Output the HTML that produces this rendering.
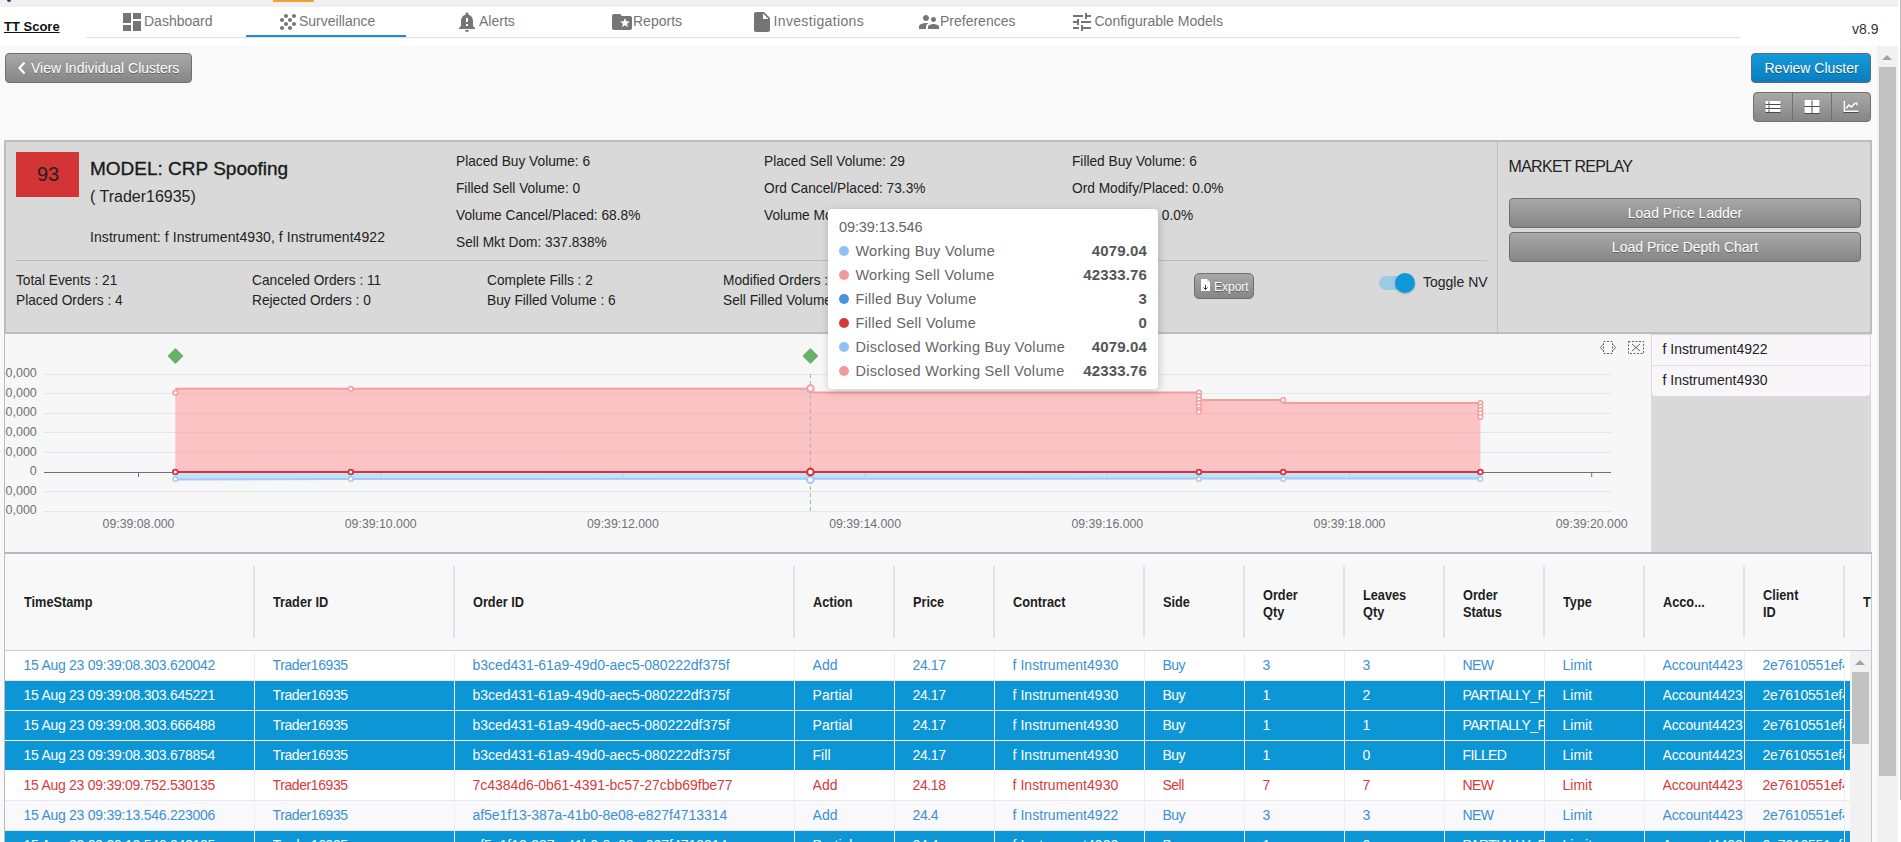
<!DOCTYPE html>
<html><head><meta charset="utf-8">
<style>
*{box-sizing:border-box;margin:0;padding:0}
html,body{width:1901px;height:842px;overflow:hidden;background:#f9f9f9;font-family:"Liberation Sans",sans-serif;color:#333}
.a{position:absolute;white-space:nowrap}
.ic{fill:#757575}
.btn-gray{border:1px solid #6f6f6f;border-radius:4px;background:linear-gradient(#a8a8a8,#868686)}
.btn-blue{border:1px solid #5b6b76;border-radius:4px;background:linear-gradient(#139ad9,#0b7dbf)}
.ts{text-shadow:0 -1px 0 rgba(0,0,0,.45)}
</style></head><body>
<div class="a" style="left:0;top:0;width:1901px;height:7px;background:#f0f0f0"></div>
<div class="a" style="left:273px;top:0;width:41px;height:2px;background:#f0a030"></div>
<div class="a" style="left:7px;top:-2px;width:4px;height:4px;border-radius:2px;background:#1c3c78"></div>
<div class="a" style="left:0;top:7px;width:1898px;height:39px;background:#fff"></div>
<div class="a" style="left:4px;top:20px;font-size:13px;line-height:13px;color:#111;font-weight:bold;text-decoration:underline">TT Score</div>
<div class="a" style="left:86px;top:37px;width:1654px;height:1px;background:#e0e0e0"></div>
<div class="a" style="left:246px;top:35px;width:160px;height:2px;background:#1a8fd6"></div>
<div class="a" style="left:1852px;top:22px;font-size:14px;line-height:14px;color:#333;">v8.9</div>
<svg class="a" style="left:120px;top:10px" width="24" height="24" viewBox="0 0 24 24"><path class="ic" d="M3 13h8V3H3v10zm0 8h8v-6H3v6zm10 0h8V11h-8v10zm0-18v6h8V3h-8z"/></svg>
<div class="a" style="left:144px;top:14px;font-size:14px;line-height:14px;color:#757575;">Dashboard</div>
<svg class="a" style="left:276px;top:10px" width="24" height="24" viewBox="0 0 24 24"><path class="ic" d="M10 12c-1.1 0-2 .9-2 2s.9 2 2 2 2-.9 2-2-.9-2-2-2zM6 8c-1.1 0-2 .9-2 2s.9 2 2 2 2-.9 2-2-.9-2-2-2zm0 8c-1.1 0-2 .9-2 2s.9 2 2 2 2-.9 2-2-.9-2-2-2zm12-8c1.1 0 2-.9 2-2s-.9-2-2-2-2 .9-2 2 .9 2 2 2zm-4 8c-1.1 0-2 .9-2 2s.9 2 2 2 2-.9 2-2-.9-2-2-2zm4-4c-1.1 0-2 .9-2 2s.9 2 2 2 2-.9 2-2-.9-2-2-2zm-4-4c-1.1 0-2 .9-2 2s.9 2 2 2 2-.9 2-2-.9-2-2-2zm-4-4c-1.1 0-2 .9-2 2s.9 2 2 2 2-.9 2-2-.9-2-2-2z"/></svg>
<div class="a" style="left:299px;top:14px;font-size:14px;line-height:14px;color:#757575;">Surveillance</div>
<svg class="a" style="left:455px;top:10px" width="24" height="24" viewBox="0 0 24 24"><path class="ic" d="M18 16v-5c0-3.08-1.64-5.64-4.5-6.32V4c0-.83-.67-1.5-1.5-1.5s-1.5.67-1.5 1.5v.68C7.63 5.36 6 7.92 6 11v5l-2 2v1h16v-1l-2-2zm-5 0h-2v-2h2v2zm0-4h-2V8h2v4zm-1 10c1.1 0 2-.9 2-2h-4c0 1.1.89 2 2 2z"/></svg>
<div class="a" style="left:479px;top:14px;font-size:14px;line-height:14px;color:#757575;">Alerts</div>
<svg class="a" style="left:609.5px;top:10px" width="24" height="24" viewBox="0 0 24 24"><path class="ic" d="M20 6h-8l-2-2H4c-1.1 0-1.99.9-1.99 2L2 18c0 1.1.9 2 2 2h16c1.1 0 2-.9 2-2V8c0-1.1-.9-2-2-2zm-2.06 11L15 15.28 12.06 17l.78-3.33-2.59-2.24 3.41-.29L15 8l1.34 3.14 3.41.29-2.59 2.24.78 3.33z"/></svg>
<div class="a" style="left:633px;top:14px;font-size:14px;line-height:14px;color:#757575;">Reports</div>
<svg class="a" style="left:750px;top:10px" width="24" height="24" viewBox="0 0 24 24"><path class="ic" fill-rule="evenodd" d="M6 2c-1.1 0-1.99.9-1.99 2L4 20c0 1.1.89 2 1.99 2H18c1.1 0 2-.9 2-2V8l-6-6H6zm7 7V3.5L18.5 9H13z"/></svg>
<div class="a" style="left:773.5px;top:14px;font-size:14px;line-height:14px;color:#757575;letter-spacing:0.35px">Investigations</div>
<svg class="a" style="left:916.5px;top:10px" width="24" height="24" viewBox="0 0 24 24"><path class="ic" d="M16.5 12c1.38 0 2.49-1.12 2.49-2.5S17.88 7 16.5 7C15.12 7 14 8.12 14 9.5s1.12 2.5 2.5 2.5zM9 11c1.66 0 2.99-1.34 2.99-3S10.66 5 9 5C7.34 5 6 6.34 6 8s1.34 3 3 3zm7.5 3c-1.83 0-5.5.92-5.5 2.75V19h11v-2.25c0-1.83-3.67-2.75-5.5-2.75zM9 13c-2.33 0-7 1.17-7 3.5V19h7v-2.25c0-.85.33-2.34 2.37-3.47C10.5 13.1 9.66 13 9 13z"/></svg>
<div class="a" style="left:940px;top:14px;font-size:14px;line-height:14px;color:#757575;">Preferences</div>
<svg class="a" style="left:1070px;top:10px" width="24" height="24" viewBox="0 0 24 24"><path class="ic" d="M3 17v2h6v-2H3zM3 5v2h10V5H3zm10 16v-2h8v-2h-8v-2h-2v6h2zM7 9v2H3v2h4v2h2V9H7zm14 4v-2H11v2h10zm-6-4h2V7h4V5h-4V3h-2v6z"/></svg>
<div class="a" style="left:1094.5px;top:14px;font-size:14px;line-height:14px;color:#757575;">Configurable Models</div>
<div class="a btn-gray" style="left:5px;top:53px;width:187px;height:30px"></div>
<svg class="a" style="left:17px;top:61px" width="10" height="14" viewBox="0 0 10 14"><path d="M7.5 1.5L2.5 7l5 5.5" fill="none" stroke="#fff" stroke-width="2.2"/></svg>
<div class="a" style="left:31px;top:61px;font-size:14px;line-height:14px;color:#fff;text-shadow:0 1px 0 rgba(0,0,0,.35)">View Individual Clusters</div>
<div class="a btn-blue" style="left:1751px;top:53px;width:120px;height:30px"></div>
<div class="a" style="left:1764.5px;top:61px;font-size:14px;line-height:14px;color:#fff;text-shadow:0 1px 0 rgba(0,0,0,.35)">Review Cluster</div>
<div class="a btn-gray" style="left:1753px;top:92px;width:118px;height:30px"></div>
<div class="a" style="left:1792px;top:93px;width:1px;height:28px;background:#707070"></div>
<div class="a" style="left:1831px;top:93px;width:1px;height:28px;background:#707070"></div>
<svg class="a" style="left:1760px;top:96px" width="100" height="22" viewBox="1760 96 100 22"><g fill="#333" opacity="0.75"><rect x="1765.5" y="102" width="15" height="3"/><rect x="1765.5" y="106" width="15" height="3"/><rect x="1765.5" y="110" width="15" height="3"/><rect x="1804.5" y="101" width="15" height="13"/><path d="M1843.5 102h1.5v9.5h13.5v1.5h-15z"/></g><g fill="#fff"><rect x="1765.5" y="101" width="3" height="3"/><rect x="1769.5" y="101" width="11" height="3"/><rect x="1765.5" y="105" width="3" height="3"/><rect x="1769.5" y="105" width="11" height="3"/><rect x="1765.5" y="109" width="3" height="3"/><rect x="1769.5" y="109" width="11" height="3"/><rect x="1804.5" y="100" width="7" height="6"/><rect x="1812.5" y="100" width="7" height="6"/><rect x="1804.5" y="107" width="7" height="6"/><rect x="1812.5" y="107" width="7" height="6"/><path d="M1843.5 101h1.5v9.5h13.5v1.5h-15z"/><path d="M1846 108.5l3-3.5 2.5 2 3-3.5" fill="none" stroke="#fff" stroke-width="1.6"/><path d="M1854 102.5h3.5v3.5z"/></g></svg>
<div class="a" style="left:1877px;top:46px;width:21px;height:796px;background:#f1f1f1"></div>
<div class="a" style="left:1879px;top:67px;width:17px;height:709px;background:#c1c1c1"></div>
<svg class="a" style="left:1882px;top:54px" width="10" height="7" viewBox="0 0 10 7"><path d="M0 6h10L5 1z" fill="#a3a3a3"/></svg>
<div class="a" style="left:1898px;top:0;width:3px;height:842px;background:#fff"></div>
<div class="a" style="left:1900px;top:0;width:1px;height:800px;background:#bdbdbd"></div>
<div class="a" style="left:4px;top:140px;width:1868px;height:194px;background:#d9d9d9;border:2px solid #bdbdbd"></div>
<div class="a" style="left:16px;top:152px;width:63px;height:45px;background:#d33535"></div>
<div class="a" style="left:37px;top:164px;font-size:20px;line-height:20px;color:#222;">93</div>
<div class="a" style="left:90px;top:159px;font-size:19px;line-height:19px;color:#1a1a1a;-webkit-text-stroke:0.35px #1a1a1a">MODEL: CRP Spoofing</div>
<div class="a" style="left:90px;top:189px;font-size:16px;line-height:16px;color:#222;">( Trader16935)</div>
<div class="a" style="left:90px;top:230px;font-size:14px;line-height:14px;color:#222;letter-spacing:0.07px">Instrument: f Instrument4930, f Instrument4922</div>
<div class="a" style="left:456px;top:154px;font-size:14.5px;line-height:14.5px;color:#222;transform:scaleX(0.945);transform-origin:0 0">Placed Buy Volume: 6</div>
<div class="a" style="left:764px;top:154px;font-size:14.5px;line-height:14.5px;color:#222;transform:scaleX(0.945);transform-origin:0 0">Placed Sell Volume: 29</div>
<div class="a" style="left:1072px;top:154px;font-size:14.5px;line-height:14.5px;color:#222;transform:scaleX(0.945);transform-origin:0 0">Filled Buy Volume: 6</div>
<div class="a" style="left:456px;top:181px;font-size:14.5px;line-height:14.5px;color:#222;transform:scaleX(0.945);transform-origin:0 0">Filled Sell Volume: 0</div>
<div class="a" style="left:764px;top:181px;font-size:14.5px;line-height:14.5px;color:#222;transform:scaleX(0.945);transform-origin:0 0">Ord Cancel/Placed: 73.3%</div>
<div class="a" style="left:1072px;top:181px;font-size:14.5px;line-height:14.5px;color:#222;transform:scaleX(0.945);transform-origin:0 0">Ord Modify/Placed: 0.0%</div>
<div class="a" style="left:456px;top:208px;font-size:14.5px;line-height:14.5px;color:#222;transform:scaleX(0.945);transform-origin:0 0">Volume Cancel/Placed: 68.8%</div>
<div class="a" style="left:764px;top:208px;font-size:14.5px;line-height:14.5px;color:#222;transform:scaleX(0.945);transform-origin:0 0">Volume Modify/Placed: 0.0%</div>
<div class="a" style="left:1072px;top:208px;font-size:14.5px;line-height:14.5px;color:#222;transform:scaleX(0.945);transform-origin:0 0">Buy Mkt Dom: 0.0%</div>
<div class="a" style="left:456px;top:235px;font-size:14.5px;line-height:14.5px;color:#222;transform:scaleX(0.945);transform-origin:0 0">Sell Mkt Dom: 337.838%</div>
<div class="a" style="left:16px;top:260px;width:1471px;height:1px;background:#bdbdbd"></div>
<div class="a" style="left:16px;top:273px;font-size:14.5px;line-height:14.5px;color:#222;transform:scaleX(0.945);transform-origin:0 0">Total Events : 21</div>
<div class="a" style="left:251.5px;top:273px;font-size:14.5px;line-height:14.5px;color:#222;transform:scaleX(0.945);transform-origin:0 0">Canceled Orders : 11</div>
<div class="a" style="left:487px;top:273px;font-size:14.5px;line-height:14.5px;color:#222;transform:scaleX(0.945);transform-origin:0 0">Complete Fills : 2</div>
<div class="a" style="left:722.5px;top:273px;font-size:14.5px;line-height:14.5px;color:#222;transform:scaleX(0.945);transform-origin:0 0">Modified Orders : 0</div>
<div class="a" style="left:16px;top:293px;font-size:14.5px;line-height:14.5px;color:#222;transform:scaleX(0.945);transform-origin:0 0">Placed Orders : 4</div>
<div class="a" style="left:251.5px;top:293px;font-size:14.5px;line-height:14.5px;color:#222;transform:scaleX(0.945);transform-origin:0 0">Rejected Orders : 0</div>
<div class="a" style="left:487px;top:293px;font-size:14.5px;line-height:14.5px;color:#222;transform:scaleX(0.945);transform-origin:0 0">Buy Filled Volume : 6</div>
<div class="a" style="left:722.5px;top:293px;font-size:14.5px;line-height:14.5px;color:#222;transform:scaleX(0.945);transform-origin:0 0">Sell Filled Volume : 0</div>
<div class="a btn-gray" style="left:1194px;top:273px;width:60px;height:26px;border-radius:5px"></div>
<svg class="a" style="left:1200px;top:279px" width="11" height="13" viewBox="0 0 11 13"><path d="M1 0h6l3 3v9H1z" fill="#fff"/><path d="M7 0v3h3" fill="#ddd"/><path d="M5.5 6v4.5M3.5 8.5l2 2 2-2" fill="none" stroke="#333" stroke-width="1"/></svg>
<div class="a" style="left:1214px;top:281px;font-size:12px;line-height:12px;color:#fff;text-shadow:0 1px 0 rgba(0,0,0,.4)">Export</div>
<div class="a" style="left:1379px;top:276px;width:34px;height:14px;border-radius:7px;background:#9ccae2"></div>
<div class="a" style="left:1395px;top:273px;width:20px;height:20px;border-radius:10px;background:#0f98d8;box-shadow:0 1px 2px rgba(0,0,0,.25)"></div>
<div class="a" style="left:1423px;top:275px;font-size:14px;line-height:14px;color:#222;">Toggle NV</div>
<div class="a" style="left:1497px;top:142px;width:1px;height:190px;background:#bdbdbd"></div>
<div class="a" style="left:1508.5px;top:159px;font-size:16px;line-height:16px;color:#222;letter-spacing:-0.7px">MARKET REPLAY</div>
<div class="a btn-gray" style="left:1509px;top:198px;width:352px;height:30px"></div>
<div class="a" style="left:1485px;width:400px;text-align:center;top:206px;font-size:14px;line-height:14px;color:#fff;text-shadow:0 1px 0 rgba(0,0,0,.35)">Load Price Ladder</div>
<div class="a btn-gray" style="left:1509px;top:232px;width:352px;height:30px"></div>
<div class="a" style="left:1485px;width:400px;text-align:center;top:240px;font-size:14px;line-height:14px;color:#fff;text-shadow:0 1px 0 rgba(0,0,0,.35)">Load Price Depth Chart</div>
<div class="a" style="left:4px;top:334px;width:1px;height:219px;background:#bdbdbd"></div>
<div class="a" style="left:5px;top:334px;width:1646px;height:218px;background:#f7f7f7;overflow:hidden">
<svg width="1646" height="218" viewBox="5 334 1646 218" style="position:absolute;left:0;top:0" font-family="Liberation Sans"><line x1="44" x2="1611" y1="374.5" y2="374.5" stroke="#e0e6f1" stroke-width="1"/><line x1="44" x2="1611" y1="393.5" y2="393.5" stroke="#e0e6f1" stroke-width="1"/><line x1="44" x2="1611" y1="413.5" y2="413.5" stroke="#e0e6f1" stroke-width="1"/><line x1="44" x2="1611" y1="432.5" y2="432.5" stroke="#e0e6f1" stroke-width="1"/><line x1="44" x2="1611" y1="452.5" y2="452.5" stroke="#e0e6f1" stroke-width="1"/><line x1="44" x2="1611" y1="491.5" y2="491.5" stroke="#e0e6f1" stroke-width="1"/><line x1="44" x2="1611" y1="511.5" y2="511.5" stroke="#e0e6f1" stroke-width="1"/><path d="M175.3 472 L175.3 392.7 L175.3 388.7 L350.8 388.7 L810.4 388.7 L810.4 392.4 L1198.9 392.4 L1198.9 400 L1283.2 400 L1283.2 403 L1480.4 403 L1480.4 472 Z" fill="#ff9999" fill-opacity="0.55"/><path d="M175.3 388.7 L810.4 388.7 L810.4 392.4 L1198.9 392.4 L1198.9 400 L1283.2 400 L1283.2 403 L1480.4 403" fill="none" stroke="#f99c9c" stroke-width="2"/><line x1="44" x2="1611" y1="472.5" y2="472.5" stroke="#6e7079" stroke-width="1"/><line x1="138.5" x2="138.5" y1="472" y2="477" stroke="#6e7079" stroke-width="1"/><line x1="380.7" x2="380.7" y1="472" y2="477" stroke="#6e7079" stroke-width="1"/><line x1="622.9" x2="622.9" y1="472" y2="477" stroke="#6e7079" stroke-width="1"/><line x1="865.1" x2="865.1" y1="472" y2="477" stroke="#6e7079" stroke-width="1"/><line x1="1107.3" x2="1107.3" y1="472" y2="477" stroke="#6e7079" stroke-width="1"/><line x1="1349.5" x2="1349.5" y1="472" y2="477" stroke="#6e7079" stroke-width="1"/><line x1="1591.7" x2="1591.7" y1="472" y2="477" stroke="#6e7079" stroke-width="1"/><path d="M175.3 473 L175.3 479.5 L350.8 479 L1480.4 478.5 L1480.4 473 Z" fill="#bcdcfb" fill-opacity="0.85"/><path d="M175.3 479.5 L350.8 479 L1480.4 478.5" fill="none" stroke="#a3caf6" stroke-width="2"/><line x1="175.3" x2="1480.4" y1="472" y2="472" stroke="#d6343c" stroke-width="2.2"/><circle cx="175.3" cy="392.7" r="2.3" fill="#fff" stroke="#f0a0a0" stroke-width="1.5"/><circle cx="350.8" cy="388.8" r="2.3" fill="#fff" stroke="#f0a0a0" stroke-width="1.5"/><circle cx="1283.2" cy="400" r="2.3" fill="#fff" stroke="#f0a0a0" stroke-width="1.5"/><circle cx="1198.9" cy="392.5" r="2.3" fill="#fff" stroke="#f0a0a0" stroke-width="1.5"/><circle cx="1198.9" cy="396" r="2.3" fill="#fff" stroke="#f0a0a0" stroke-width="1.5"/><circle cx="1198.9" cy="399.5" r="2.3" fill="#fff" stroke="#f0a0a0" stroke-width="1.5"/><circle cx="1198.9" cy="403" r="2.3" fill="#fff" stroke="#f0a0a0" stroke-width="1.5"/><circle cx="1198.9" cy="406.5" r="2.3" fill="#fff" stroke="#f0a0a0" stroke-width="1.5"/><circle cx="1198.9" cy="410" r="2.3" fill="#fff" stroke="#f0a0a0" stroke-width="1.5"/><circle cx="1198.9" cy="412" r="2.3" fill="#fff" stroke="#f0a0a0" stroke-width="1.5"/><circle cx="1480.4" cy="403" r="2.3" fill="#fff" stroke="#f0a0a0" stroke-width="1.5"/><circle cx="1480.4" cy="406.5" r="2.3" fill="#fff" stroke="#f0a0a0" stroke-width="1.5"/><circle cx="1480.4" cy="410" r="2.3" fill="#fff" stroke="#f0a0a0" stroke-width="1.5"/><circle cx="1480.4" cy="413.5" r="2.3" fill="#fff" stroke="#f0a0a0" stroke-width="1.5"/><circle cx="1480.4" cy="417" r="2.3" fill="#fff" stroke="#f0a0a0" stroke-width="1.5"/><circle cx="175.3" cy="479" r="2.3" fill="#fff" stroke="#a3caf6" stroke-width="1.5"/><circle cx="175.3" cy="472" r="2.4" fill="#fff" stroke="#d6343c" stroke-width="1.8"/><circle cx="350.8" cy="479" r="2.3" fill="#fff" stroke="#a3caf6" stroke-width="1.5"/><circle cx="350.8" cy="472" r="2.4" fill="#fff" stroke="#d6343c" stroke-width="1.8"/><circle cx="1198.9" cy="479" r="2.3" fill="#fff" stroke="#a3caf6" stroke-width="1.5"/><circle cx="1198.9" cy="472" r="2.4" fill="#fff" stroke="#d6343c" stroke-width="1.8"/><circle cx="1283.2" cy="479" r="2.3" fill="#fff" stroke="#a3caf6" stroke-width="1.5"/><circle cx="1283.2" cy="472" r="2.4" fill="#fff" stroke="#d6343c" stroke-width="1.8"/><circle cx="1480.4" cy="479" r="2.3" fill="#fff" stroke="#a3caf6" stroke-width="1.5"/><circle cx="1480.4" cy="472" r="2.4" fill="#fff" stroke="#d6343c" stroke-width="1.8"/><line x1="810.4" x2="810.4" y1="374" y2="511" stroke="#a8b0bb" stroke-width="1" stroke-dasharray="4 3"/><circle cx="810.4" cy="388.6" r="3.3" fill="#fff" stroke="#f0a0a0" stroke-width="2"/><circle cx="810.4" cy="479.7" r="3.3" fill="#fff" stroke="#a3caf6" stroke-width="2"/><circle cx="810.4" cy="472" r="3.3" fill="#fff" stroke="#d6343c" stroke-width="2.2"/><path d="M175.5 348 L183.5 356 L175.5 364 L167.5 356 Z" fill="#67b168"/><path d="M810.4 348 L818.4 356 L810.4 364 L802.4 356 Z" fill="#67b168"/><text x="36.8" y="377.3" text-anchor="end" font-size="12.5" fill="#6e7079">50,000</text><text x="36.8" y="396.8" text-anchor="end" font-size="12.5" fill="#6e7079">40,000</text><text x="36.8" y="416.3" text-anchor="end" font-size="12.5" fill="#6e7079">30,000</text><text x="36.8" y="435.8" text-anchor="end" font-size="12.5" fill="#6e7079">20,000</text><text x="36.8" y="455.5" text-anchor="end" font-size="12.5" fill="#6e7079">10,000</text><text x="36.8" y="475.3" text-anchor="end" font-size="12.5" fill="#6e7079">0</text><text x="36.8" y="494.8" text-anchor="end" font-size="12.5" fill="#6e7079">-10,000</text><text x="36.8" y="514.4" text-anchor="end" font-size="12.5" fill="#6e7079">-20,000</text><text x="138.5" y="528" text-anchor="middle" font-size="12.3" fill="#6e7079">09:39:08.000</text><text x="380.7" y="528" text-anchor="middle" font-size="12.3" fill="#6e7079">09:39:10.000</text><text x="622.9" y="528" text-anchor="middle" font-size="12.3" fill="#6e7079">09:39:12.000</text><text x="865.1" y="528" text-anchor="middle" font-size="12.3" fill="#6e7079">09:39:14.000</text><text x="1107.3" y="528" text-anchor="middle" font-size="12.3" fill="#6e7079">09:39:16.000</text><text x="1349.5" y="528" text-anchor="middle" font-size="12.3" fill="#6e7079">09:39:18.000</text><text x="1591.7" y="528" text-anchor="middle" font-size="12.3" fill="#6e7079">09:39:20.000</text><g fill="none" stroke="#666" stroke-width="1" stroke-dasharray="2 1.5"><rect x="1603.5" y="341.5" width="9" height="12"/></g><path d="M1603 344.5 L1600.5 347.5 L1603 350.5 M1613 344.5 L1615.5 347.5 L1613 350.5" fill="none" stroke="#666" stroke-width="1"/><g fill="none" stroke="#666" stroke-width="1" stroke-dasharray="2 1.5"><rect x="1628.5" y="341.5" width="15" height="12"/></g><path d="M1632 344 L1640 351 M1640 344 L1632 351" fill="none" stroke="#666" stroke-width="1"/></svg>
</div>
<div class="a" style="left:1651px;top:334px;width:220px;height:218px;background:#d9d9d9"></div>
<div class="a" style="left:1652px;top:335px;width:218px;height:61px;background:#f8f6f8;border-radius:0 0 4px 4px"></div>
<div class="a" style="left:1652px;top:365px;width:218px;height:1px;background:#dde0e8"></div>
<div class="a" style="left:1662.5px;top:342px;font-size:14px;line-height:14px;color:#222;">f Instrument4922</div>
<div class="a" style="left:1662.5px;top:373px;font-size:14px;line-height:14px;color:#222;">f Instrument4930</div>
<div class="a" style="left:4px;top:552px;width:1868px;height:2px;background:#b6b8bd"></div>
<div class="a" style="left:4px;top:554px;width:1px;height:288px;background:#bdbdbd"></div>
<div class="a" style="left:5px;top:554px;width:1866px;height:96px;background:#f8f8f8"></div>
<div class="a" style="left:5px;top:650px;width:1866px;height:1px;background:#c9ccd4"></div>
<div class="a" style="left:1871px;top:554px;width:1px;height:288px;background:#c6c8cf"></div>
<div class="a" style="left:1872px;top:45px;width:5px;height:797px;background:#fafafa"></div>
<div class="a" style="left:253px;top:566px;width:2px;height:72px;background:#dfe2ea"></div>
<div class="a" style="left:453px;top:566px;width:2px;height:72px;background:#dfe2ea"></div>
<div class="a" style="left:793px;top:566px;width:2px;height:72px;background:#dfe2ea"></div>
<div class="a" style="left:893px;top:566px;width:2px;height:72px;background:#dfe2ea"></div>
<div class="a" style="left:993px;top:566px;width:2px;height:72px;background:#dfe2ea"></div>
<div class="a" style="left:1143px;top:566px;width:2px;height:72px;background:#dfe2ea"></div>
<div class="a" style="left:1243px;top:566px;width:2px;height:72px;background:#dfe2ea"></div>
<div class="a" style="left:1343px;top:566px;width:2px;height:72px;background:#dfe2ea"></div>
<div class="a" style="left:1443px;top:566px;width:2px;height:72px;background:#dfe2ea"></div>
<div class="a" style="left:1543px;top:566px;width:2px;height:72px;background:#dfe2ea"></div>
<div class="a" style="left:1643px;top:566px;width:2px;height:72px;background:#dfe2ea"></div>
<div class="a" style="left:1743px;top:566px;width:2px;height:72px;background:#dfe2ea"></div>
<div class="a" style="left:1843px;top:566px;width:2px;height:72px;background:#dfe2ea"></div>
<div class="a" style="left:23.5px;top:595px;font-size:14px;line-height:14px;color:#1e1e1e;font-weight:bold;transform:scaleX(0.91);transform-origin:0 0">TimeStamp</div>
<div class="a" style="left:272.5px;top:595px;font-size:14px;line-height:14px;color:#1e1e1e;font-weight:bold;transform:scaleX(0.91);transform-origin:0 0">Trader ID</div>
<div class="a" style="left:472.5px;top:595px;font-size:14px;line-height:14px;color:#1e1e1e;font-weight:bold;transform:scaleX(0.91);transform-origin:0 0">Order ID</div>
<div class="a" style="left:812.5px;top:595px;font-size:14px;line-height:14px;color:#1e1e1e;font-weight:bold;transform:scaleX(0.91);transform-origin:0 0">Action</div>
<div class="a" style="left:912.5px;top:595px;font-size:14px;line-height:14px;color:#1e1e1e;font-weight:bold;transform:scaleX(0.91);transform-origin:0 0">Price</div>
<div class="a" style="left:1012.5px;top:595px;font-size:14px;line-height:14px;color:#1e1e1e;font-weight:bold;transform:scaleX(0.91);transform-origin:0 0">Contract</div>
<div class="a" style="left:1162.5px;top:595px;font-size:14px;line-height:14px;color:#1e1e1e;font-weight:bold;transform:scaleX(0.91);transform-origin:0 0">Side</div>
<div class="a" style="left:1262.5px;top:588px;font-size:14px;line-height:14px;color:#1e1e1e;font-weight:bold;transform:scaleX(0.91);transform-origin:0 0">Order</div>
<div class="a" style="left:1262.5px;top:605px;font-size:14px;line-height:14px;color:#1e1e1e;font-weight:bold;transform:scaleX(0.91);transform-origin:0 0">Qty</div>
<div class="a" style="left:1362.5px;top:588px;font-size:14px;line-height:14px;color:#1e1e1e;font-weight:bold;transform:scaleX(0.91);transform-origin:0 0">Leaves</div>
<div class="a" style="left:1362.5px;top:605px;font-size:14px;line-height:14px;color:#1e1e1e;font-weight:bold;transform:scaleX(0.91);transform-origin:0 0">Qty</div>
<div class="a" style="left:1462.5px;top:588px;font-size:14px;line-height:14px;color:#1e1e1e;font-weight:bold;transform:scaleX(0.91);transform-origin:0 0">Order</div>
<div class="a" style="left:1462.5px;top:605px;font-size:14px;line-height:14px;color:#1e1e1e;font-weight:bold;transform:scaleX(0.91);transform-origin:0 0">Status</div>
<div class="a" style="left:1562.5px;top:595px;font-size:14px;line-height:14px;color:#1e1e1e;font-weight:bold;transform:scaleX(0.91);transform-origin:0 0">Type</div>
<div class="a" style="left:1662.5px;top:595px;font-size:14px;line-height:14px;color:#1e1e1e;font-weight:bold;transform:scaleX(0.91);transform-origin:0 0">Acco...</div>
<div class="a" style="left:1762.5px;top:588px;font-size:14px;line-height:14px;color:#1e1e1e;font-weight:bold;transform:scaleX(0.91);transform-origin:0 0">Client</div>
<div class="a" style="left:1762.5px;top:605px;font-size:14px;line-height:14px;color:#1e1e1e;font-weight:bold;transform:scaleX(0.91);transform-origin:0 0">ID</div>
<div class="a" style="left:1862.5px;top:595px;font-size:14px;line-height:14px;color:#1e1e1e;font-weight:bold;transform:scaleX(0.91);transform-origin:0 0">T</div>
<div class="a" style="left:5px;top:651px;width:1845px;height:30px;background:#ffffff;overflow:hidden">
<div class="a" style="left:0;top:29px;width:1845px;height:1px;background:#e6e8ee"></div>
<div class="a" style="left:18.5px;top:0;height:29px;padding-top:7px;width:230.5px;overflow:hidden;font-size:14px;line-height:14px;color:#3b90d2;letter-spacing:-0.27px">15 Aug 23 09:39:08.303.620042</div>
<div class="a" style="left:249px;top:0;width:1px;height:30px;background:#eceef3"></div>
<div class="a" style="left:267.5px;top:0;height:29px;padding-top:7px;width:181.5px;overflow:hidden;font-size:14px;line-height:14px;color:#3b90d2;letter-spacing:-0.4px">Trader16935</div>
<div class="a" style="left:449px;top:0;width:1px;height:30px;background:#eceef3"></div>
<div class="a" style="left:467.5px;top:0;height:29px;padding-top:7px;width:321.5px;overflow:hidden;font-size:14px;line-height:14px;color:#3b90d2;letter-spacing:-0.04px">b3ced431-61a9-49d0-aec5-080222df375f</div>
<div class="a" style="left:789px;top:0;width:1px;height:30px;background:#eceef3"></div>
<div class="a" style="left:807.5px;top:0;height:29px;padding-top:7px;width:81.5px;overflow:hidden;font-size:14px;line-height:14px;color:#3b90d2;letter-spacing:0.05px">Add</div>
<div class="a" style="left:889px;top:0;width:1px;height:30px;background:#eceef3"></div>
<div class="a" style="left:907.5px;top:0;height:29px;padding-top:7px;width:81.5px;overflow:hidden;font-size:14px;line-height:14px;color:#3b90d2;letter-spacing:-0.4px">24.17</div>
<div class="a" style="left:989px;top:0;width:1px;height:30px;background:#eceef3"></div>
<div class="a" style="left:1007.5px;top:0;height:29px;padding-top:7px;width:131.5px;overflow:hidden;font-size:14px;line-height:14px;color:#3b90d2;letter-spacing:0.05px">f Instrument4930</div>
<div class="a" style="left:1139px;top:0;width:1px;height:30px;background:#eceef3"></div>
<div class="a" style="left:1157.5px;top:0;height:29px;padding-top:7px;width:81.5px;overflow:hidden;font-size:14px;line-height:14px;color:#3b90d2;letter-spacing:-0.5px">Buy</div>
<div class="a" style="left:1239px;top:0;width:1px;height:30px;background:#eceef3"></div>
<div class="a" style="left:1257.5px;top:0;height:29px;padding-top:7px;width:81.5px;overflow:hidden;font-size:14px;line-height:14px;color:#3b90d2;letter-spacing:0px">3</div>
<div class="a" style="left:1339px;top:0;width:1px;height:30px;background:#eceef3"></div>
<div class="a" style="left:1357.5px;top:0;height:29px;padding-top:7px;width:81.5px;overflow:hidden;font-size:14px;line-height:14px;color:#3b90d2;letter-spacing:0px">3</div>
<div class="a" style="left:1439px;top:0;width:1px;height:30px;background:#eceef3"></div>
<div class="a" style="left:1457.5px;top:0;height:29px;padding-top:7px;width:81.5px;overflow:hidden;font-size:14px;line-height:14px;color:#3b90d2;letter-spacing:-0.6px">NEW</div>
<div class="a" style="left:1539px;top:0;width:1px;height:30px;background:#eceef3"></div>
<div class="a" style="left:1557.5px;top:0;height:29px;padding-top:7px;width:81.5px;overflow:hidden;font-size:14px;line-height:14px;color:#3b90d2;letter-spacing:0px">Limit</div>
<div class="a" style="left:1639px;top:0;width:1px;height:30px;background:#eceef3"></div>
<div class="a" style="left:1657.5px;top:0;height:29px;padding-top:7px;width:81.5px;overflow:hidden;font-size:14px;line-height:14px;color:#3b90d2;letter-spacing:-0.15px">Account4423</div>
<div class="a" style="left:1739px;top:0;width:1px;height:30px;background:#eceef3"></div>
<div class="a" style="left:1757.5px;top:0;height:29px;padding-top:7px;width:81.5px;overflow:hidden;font-size:14px;line-height:14px;color:#3b90d2;letter-spacing:-0.2px">2e7610551ef4a</div>
<div class="a" style="left:1839px;top:0;width:1px;height:30px;background:#eceef3"></div>
</div>
<div class="a" style="left:5px;top:681px;width:1845px;height:30px;background:#0d96d5;overflow:hidden">
<div class="a" style="left:0;top:29px;width:1845px;height:1px;background:#ffffff"></div>
<div class="a" style="left:18.5px;top:0;height:29px;padding-top:7px;width:230.5px;overflow:hidden;font-size:14px;line-height:14px;color:#fff;letter-spacing:-0.27px">15 Aug 23 09:39:08.303.645221</div>
<div class="a" style="left:249px;top:0;width:1px;height:30px;background:#ffffff"></div>
<div class="a" style="left:267.5px;top:0;height:29px;padding-top:7px;width:181.5px;overflow:hidden;font-size:14px;line-height:14px;color:#fff;letter-spacing:-0.4px">Trader16935</div>
<div class="a" style="left:449px;top:0;width:1px;height:30px;background:#ffffff"></div>
<div class="a" style="left:467.5px;top:0;height:29px;padding-top:7px;width:321.5px;overflow:hidden;font-size:14px;line-height:14px;color:#fff;letter-spacing:-0.04px">b3ced431-61a9-49d0-aec5-080222df375f</div>
<div class="a" style="left:789px;top:0;width:1px;height:30px;background:#ffffff"></div>
<div class="a" style="left:807.5px;top:0;height:29px;padding-top:7px;width:81.5px;overflow:hidden;font-size:14px;line-height:14px;color:#fff;letter-spacing:0.05px">Partial</div>
<div class="a" style="left:889px;top:0;width:1px;height:30px;background:#ffffff"></div>
<div class="a" style="left:907.5px;top:0;height:29px;padding-top:7px;width:81.5px;overflow:hidden;font-size:14px;line-height:14px;color:#fff;letter-spacing:-0.4px">24.17</div>
<div class="a" style="left:989px;top:0;width:1px;height:30px;background:#ffffff"></div>
<div class="a" style="left:1007.5px;top:0;height:29px;padding-top:7px;width:131.5px;overflow:hidden;font-size:14px;line-height:14px;color:#fff;letter-spacing:0.05px">f Instrument4930</div>
<div class="a" style="left:1139px;top:0;width:1px;height:30px;background:#ffffff"></div>
<div class="a" style="left:1157.5px;top:0;height:29px;padding-top:7px;width:81.5px;overflow:hidden;font-size:14px;line-height:14px;color:#fff;letter-spacing:-0.5px">Buy</div>
<div class="a" style="left:1239px;top:0;width:1px;height:30px;background:#ffffff"></div>
<div class="a" style="left:1257.5px;top:0;height:29px;padding-top:7px;width:81.5px;overflow:hidden;font-size:14px;line-height:14px;color:#fff;letter-spacing:0px">1</div>
<div class="a" style="left:1339px;top:0;width:1px;height:30px;background:#ffffff"></div>
<div class="a" style="left:1357.5px;top:0;height:29px;padding-top:7px;width:81.5px;overflow:hidden;font-size:14px;line-height:14px;color:#fff;letter-spacing:0px">2</div>
<div class="a" style="left:1439px;top:0;width:1px;height:30px;background:#ffffff"></div>
<div class="a" style="left:1457.5px;top:0;height:29px;padding-top:7px;width:81.5px;overflow:hidden;font-size:14px;line-height:14px;color:#fff;letter-spacing:-0.6px">PARTIALLY_FILLED</div>
<div class="a" style="left:1539px;top:0;width:1px;height:30px;background:#ffffff"></div>
<div class="a" style="left:1557.5px;top:0;height:29px;padding-top:7px;width:81.5px;overflow:hidden;font-size:14px;line-height:14px;color:#fff;letter-spacing:0px">Limit</div>
<div class="a" style="left:1639px;top:0;width:1px;height:30px;background:#ffffff"></div>
<div class="a" style="left:1657.5px;top:0;height:29px;padding-top:7px;width:81.5px;overflow:hidden;font-size:14px;line-height:14px;color:#fff;letter-spacing:-0.15px">Account4423</div>
<div class="a" style="left:1739px;top:0;width:1px;height:30px;background:#ffffff"></div>
<div class="a" style="left:1757.5px;top:0;height:29px;padding-top:7px;width:81.5px;overflow:hidden;font-size:14px;line-height:14px;color:#fff;letter-spacing:-0.2px">2e7610551ef4a</div>
<div class="a" style="left:1839px;top:0;width:1px;height:30px;background:#ffffff"></div>
</div>
<div class="a" style="left:5px;top:711px;width:1845px;height:30px;background:#0d96d5;overflow:hidden">
<div class="a" style="left:0;top:29px;width:1845px;height:1px;background:#ffffff"></div>
<div class="a" style="left:18.5px;top:0;height:29px;padding-top:7px;width:230.5px;overflow:hidden;font-size:14px;line-height:14px;color:#fff;letter-spacing:-0.27px">15 Aug 23 09:39:08.303.666488</div>
<div class="a" style="left:249px;top:0;width:1px;height:30px;background:#ffffff"></div>
<div class="a" style="left:267.5px;top:0;height:29px;padding-top:7px;width:181.5px;overflow:hidden;font-size:14px;line-height:14px;color:#fff;letter-spacing:-0.4px">Trader16935</div>
<div class="a" style="left:449px;top:0;width:1px;height:30px;background:#ffffff"></div>
<div class="a" style="left:467.5px;top:0;height:29px;padding-top:7px;width:321.5px;overflow:hidden;font-size:14px;line-height:14px;color:#fff;letter-spacing:-0.04px">b3ced431-61a9-49d0-aec5-080222df375f</div>
<div class="a" style="left:789px;top:0;width:1px;height:30px;background:#ffffff"></div>
<div class="a" style="left:807.5px;top:0;height:29px;padding-top:7px;width:81.5px;overflow:hidden;font-size:14px;line-height:14px;color:#fff;letter-spacing:0.05px">Partial</div>
<div class="a" style="left:889px;top:0;width:1px;height:30px;background:#ffffff"></div>
<div class="a" style="left:907.5px;top:0;height:29px;padding-top:7px;width:81.5px;overflow:hidden;font-size:14px;line-height:14px;color:#fff;letter-spacing:-0.4px">24.17</div>
<div class="a" style="left:989px;top:0;width:1px;height:30px;background:#ffffff"></div>
<div class="a" style="left:1007.5px;top:0;height:29px;padding-top:7px;width:131.5px;overflow:hidden;font-size:14px;line-height:14px;color:#fff;letter-spacing:0.05px">f Instrument4930</div>
<div class="a" style="left:1139px;top:0;width:1px;height:30px;background:#ffffff"></div>
<div class="a" style="left:1157.5px;top:0;height:29px;padding-top:7px;width:81.5px;overflow:hidden;font-size:14px;line-height:14px;color:#fff;letter-spacing:-0.5px">Buy</div>
<div class="a" style="left:1239px;top:0;width:1px;height:30px;background:#ffffff"></div>
<div class="a" style="left:1257.5px;top:0;height:29px;padding-top:7px;width:81.5px;overflow:hidden;font-size:14px;line-height:14px;color:#fff;letter-spacing:0px">1</div>
<div class="a" style="left:1339px;top:0;width:1px;height:30px;background:#ffffff"></div>
<div class="a" style="left:1357.5px;top:0;height:29px;padding-top:7px;width:81.5px;overflow:hidden;font-size:14px;line-height:14px;color:#fff;letter-spacing:0px">1</div>
<div class="a" style="left:1439px;top:0;width:1px;height:30px;background:#ffffff"></div>
<div class="a" style="left:1457.5px;top:0;height:29px;padding-top:7px;width:81.5px;overflow:hidden;font-size:14px;line-height:14px;color:#fff;letter-spacing:-0.6px">PARTIALLY_FILLED</div>
<div class="a" style="left:1539px;top:0;width:1px;height:30px;background:#ffffff"></div>
<div class="a" style="left:1557.5px;top:0;height:29px;padding-top:7px;width:81.5px;overflow:hidden;font-size:14px;line-height:14px;color:#fff;letter-spacing:0px">Limit</div>
<div class="a" style="left:1639px;top:0;width:1px;height:30px;background:#ffffff"></div>
<div class="a" style="left:1657.5px;top:0;height:29px;padding-top:7px;width:81.5px;overflow:hidden;font-size:14px;line-height:14px;color:#fff;letter-spacing:-0.15px">Account4423</div>
<div class="a" style="left:1739px;top:0;width:1px;height:30px;background:#ffffff"></div>
<div class="a" style="left:1757.5px;top:0;height:29px;padding-top:7px;width:81.5px;overflow:hidden;font-size:14px;line-height:14px;color:#fff;letter-spacing:-0.2px">2e7610551ef4a</div>
<div class="a" style="left:1839px;top:0;width:1px;height:30px;background:#ffffff"></div>
</div>
<div class="a" style="left:5px;top:741px;width:1845px;height:30px;background:#0d96d5;overflow:hidden">
<div class="a" style="left:0;top:29px;width:1845px;height:1px;background:#ffffff"></div>
<div class="a" style="left:18.5px;top:0;height:29px;padding-top:7px;width:230.5px;overflow:hidden;font-size:14px;line-height:14px;color:#fff;letter-spacing:-0.27px">15 Aug 23 09:39:08.303.678854</div>
<div class="a" style="left:249px;top:0;width:1px;height:30px;background:#ffffff"></div>
<div class="a" style="left:267.5px;top:0;height:29px;padding-top:7px;width:181.5px;overflow:hidden;font-size:14px;line-height:14px;color:#fff;letter-spacing:-0.4px">Trader16935</div>
<div class="a" style="left:449px;top:0;width:1px;height:30px;background:#ffffff"></div>
<div class="a" style="left:467.5px;top:0;height:29px;padding-top:7px;width:321.5px;overflow:hidden;font-size:14px;line-height:14px;color:#fff;letter-spacing:-0.04px">b3ced431-61a9-49d0-aec5-080222df375f</div>
<div class="a" style="left:789px;top:0;width:1px;height:30px;background:#ffffff"></div>
<div class="a" style="left:807.5px;top:0;height:29px;padding-top:7px;width:81.5px;overflow:hidden;font-size:14px;line-height:14px;color:#fff;letter-spacing:0.05px">Fill</div>
<div class="a" style="left:889px;top:0;width:1px;height:30px;background:#ffffff"></div>
<div class="a" style="left:907.5px;top:0;height:29px;padding-top:7px;width:81.5px;overflow:hidden;font-size:14px;line-height:14px;color:#fff;letter-spacing:-0.4px">24.17</div>
<div class="a" style="left:989px;top:0;width:1px;height:30px;background:#ffffff"></div>
<div class="a" style="left:1007.5px;top:0;height:29px;padding-top:7px;width:131.5px;overflow:hidden;font-size:14px;line-height:14px;color:#fff;letter-spacing:0.05px">f Instrument4930</div>
<div class="a" style="left:1139px;top:0;width:1px;height:30px;background:#ffffff"></div>
<div class="a" style="left:1157.5px;top:0;height:29px;padding-top:7px;width:81.5px;overflow:hidden;font-size:14px;line-height:14px;color:#fff;letter-spacing:-0.5px">Buy</div>
<div class="a" style="left:1239px;top:0;width:1px;height:30px;background:#ffffff"></div>
<div class="a" style="left:1257.5px;top:0;height:29px;padding-top:7px;width:81.5px;overflow:hidden;font-size:14px;line-height:14px;color:#fff;letter-spacing:0px">1</div>
<div class="a" style="left:1339px;top:0;width:1px;height:30px;background:#ffffff"></div>
<div class="a" style="left:1357.5px;top:0;height:29px;padding-top:7px;width:81.5px;overflow:hidden;font-size:14px;line-height:14px;color:#fff;letter-spacing:0px">0</div>
<div class="a" style="left:1439px;top:0;width:1px;height:30px;background:#ffffff"></div>
<div class="a" style="left:1457.5px;top:0;height:29px;padding-top:7px;width:81.5px;overflow:hidden;font-size:14px;line-height:14px;color:#fff;letter-spacing:-0.6px">FILLED</div>
<div class="a" style="left:1539px;top:0;width:1px;height:30px;background:#ffffff"></div>
<div class="a" style="left:1557.5px;top:0;height:29px;padding-top:7px;width:81.5px;overflow:hidden;font-size:14px;line-height:14px;color:#fff;letter-spacing:0px">Limit</div>
<div class="a" style="left:1639px;top:0;width:1px;height:30px;background:#ffffff"></div>
<div class="a" style="left:1657.5px;top:0;height:29px;padding-top:7px;width:81.5px;overflow:hidden;font-size:14px;line-height:14px;color:#fff;letter-spacing:-0.15px">Account4423</div>
<div class="a" style="left:1739px;top:0;width:1px;height:30px;background:#ffffff"></div>
<div class="a" style="left:1757.5px;top:0;height:29px;padding-top:7px;width:81.5px;overflow:hidden;font-size:14px;line-height:14px;color:#fff;letter-spacing:-0.2px">2e7610551ef4a</div>
<div class="a" style="left:1839px;top:0;width:1px;height:30px;background:#ffffff"></div>
</div>
<div class="a" style="left:5px;top:771px;width:1845px;height:30px;background:#ffffff;overflow:hidden">
<div class="a" style="left:0;top:29px;width:1845px;height:1px;background:#e6e8ee"></div>
<div class="a" style="left:18.5px;top:0;height:29px;padding-top:7px;width:230.5px;overflow:hidden;font-size:14px;line-height:14px;color:#d83a3c;letter-spacing:-0.27px">15 Aug 23 09:39:09.752.530135</div>
<div class="a" style="left:249px;top:0;width:1px;height:30px;background:#eceef3"></div>
<div class="a" style="left:267.5px;top:0;height:29px;padding-top:7px;width:181.5px;overflow:hidden;font-size:14px;line-height:14px;color:#d83a3c;letter-spacing:-0.4px">Trader16935</div>
<div class="a" style="left:449px;top:0;width:1px;height:30px;background:#eceef3"></div>
<div class="a" style="left:467.5px;top:0;height:29px;padding-top:7px;width:321.5px;overflow:hidden;font-size:14px;line-height:14px;color:#d83a3c;letter-spacing:-0.04px">7c4384d6-0b61-4391-bc57-27cbb69fbe77</div>
<div class="a" style="left:789px;top:0;width:1px;height:30px;background:#eceef3"></div>
<div class="a" style="left:807.5px;top:0;height:29px;padding-top:7px;width:81.5px;overflow:hidden;font-size:14px;line-height:14px;color:#d83a3c;letter-spacing:0.05px">Add</div>
<div class="a" style="left:889px;top:0;width:1px;height:30px;background:#eceef3"></div>
<div class="a" style="left:907.5px;top:0;height:29px;padding-top:7px;width:81.5px;overflow:hidden;font-size:14px;line-height:14px;color:#d83a3c;letter-spacing:-0.4px">24.18</div>
<div class="a" style="left:989px;top:0;width:1px;height:30px;background:#eceef3"></div>
<div class="a" style="left:1007.5px;top:0;height:29px;padding-top:7px;width:131.5px;overflow:hidden;font-size:14px;line-height:14px;color:#d83a3c;letter-spacing:0.05px">f Instrument4930</div>
<div class="a" style="left:1139px;top:0;width:1px;height:30px;background:#eceef3"></div>
<div class="a" style="left:1157.5px;top:0;height:29px;padding-top:7px;width:81.5px;overflow:hidden;font-size:14px;line-height:14px;color:#d83a3c;letter-spacing:-0.5px">Sell</div>
<div class="a" style="left:1239px;top:0;width:1px;height:30px;background:#eceef3"></div>
<div class="a" style="left:1257.5px;top:0;height:29px;padding-top:7px;width:81.5px;overflow:hidden;font-size:14px;line-height:14px;color:#d83a3c;letter-spacing:0px">7</div>
<div class="a" style="left:1339px;top:0;width:1px;height:30px;background:#eceef3"></div>
<div class="a" style="left:1357.5px;top:0;height:29px;padding-top:7px;width:81.5px;overflow:hidden;font-size:14px;line-height:14px;color:#d83a3c;letter-spacing:0px">7</div>
<div class="a" style="left:1439px;top:0;width:1px;height:30px;background:#eceef3"></div>
<div class="a" style="left:1457.5px;top:0;height:29px;padding-top:7px;width:81.5px;overflow:hidden;font-size:14px;line-height:14px;color:#d83a3c;letter-spacing:-0.6px">NEW</div>
<div class="a" style="left:1539px;top:0;width:1px;height:30px;background:#eceef3"></div>
<div class="a" style="left:1557.5px;top:0;height:29px;padding-top:7px;width:81.5px;overflow:hidden;font-size:14px;line-height:14px;color:#d83a3c;letter-spacing:0px">Limit</div>
<div class="a" style="left:1639px;top:0;width:1px;height:30px;background:#eceef3"></div>
<div class="a" style="left:1657.5px;top:0;height:29px;padding-top:7px;width:81.5px;overflow:hidden;font-size:14px;line-height:14px;color:#d83a3c;letter-spacing:-0.15px">Account4423</div>
<div class="a" style="left:1739px;top:0;width:1px;height:30px;background:#eceef3"></div>
<div class="a" style="left:1757.5px;top:0;height:29px;padding-top:7px;width:81.5px;overflow:hidden;font-size:14px;line-height:14px;color:#d83a3c;letter-spacing:-0.2px">2e7610551ef4a</div>
<div class="a" style="left:1839px;top:0;width:1px;height:30px;background:#eceef3"></div>
</div>
<div class="a" style="left:5px;top:801px;width:1845px;height:30px;background:#f9f9fb;overflow:hidden">
<div class="a" style="left:0;top:29px;width:1845px;height:1px;background:#e6e8ee"></div>
<div class="a" style="left:18.5px;top:0;height:29px;padding-top:7px;width:230.5px;overflow:hidden;font-size:14px;line-height:14px;color:#3b90d2;letter-spacing:-0.27px">15 Aug 23 09:39:13.546.223006</div>
<div class="a" style="left:249px;top:0;width:1px;height:30px;background:#eceef3"></div>
<div class="a" style="left:267.5px;top:0;height:29px;padding-top:7px;width:181.5px;overflow:hidden;font-size:14px;line-height:14px;color:#3b90d2;letter-spacing:-0.4px">Trader16935</div>
<div class="a" style="left:449px;top:0;width:1px;height:30px;background:#eceef3"></div>
<div class="a" style="left:467.5px;top:0;height:29px;padding-top:7px;width:321.5px;overflow:hidden;font-size:14px;line-height:14px;color:#3b90d2;letter-spacing:-0.04px">af5e1f13-387a-41b0-8e08-e827f4713314</div>
<div class="a" style="left:789px;top:0;width:1px;height:30px;background:#eceef3"></div>
<div class="a" style="left:807.5px;top:0;height:29px;padding-top:7px;width:81.5px;overflow:hidden;font-size:14px;line-height:14px;color:#3b90d2;letter-spacing:0.05px">Add</div>
<div class="a" style="left:889px;top:0;width:1px;height:30px;background:#eceef3"></div>
<div class="a" style="left:907.5px;top:0;height:29px;padding-top:7px;width:81.5px;overflow:hidden;font-size:14px;line-height:14px;color:#3b90d2;letter-spacing:-0.4px">24.4</div>
<div class="a" style="left:989px;top:0;width:1px;height:30px;background:#eceef3"></div>
<div class="a" style="left:1007.5px;top:0;height:29px;padding-top:7px;width:131.5px;overflow:hidden;font-size:14px;line-height:14px;color:#3b90d2;letter-spacing:0.05px">f Instrument4922</div>
<div class="a" style="left:1139px;top:0;width:1px;height:30px;background:#eceef3"></div>
<div class="a" style="left:1157.5px;top:0;height:29px;padding-top:7px;width:81.5px;overflow:hidden;font-size:14px;line-height:14px;color:#3b90d2;letter-spacing:-0.5px">Buy</div>
<div class="a" style="left:1239px;top:0;width:1px;height:30px;background:#eceef3"></div>
<div class="a" style="left:1257.5px;top:0;height:29px;padding-top:7px;width:81.5px;overflow:hidden;font-size:14px;line-height:14px;color:#3b90d2;letter-spacing:0px">3</div>
<div class="a" style="left:1339px;top:0;width:1px;height:30px;background:#eceef3"></div>
<div class="a" style="left:1357.5px;top:0;height:29px;padding-top:7px;width:81.5px;overflow:hidden;font-size:14px;line-height:14px;color:#3b90d2;letter-spacing:0px">3</div>
<div class="a" style="left:1439px;top:0;width:1px;height:30px;background:#eceef3"></div>
<div class="a" style="left:1457.5px;top:0;height:29px;padding-top:7px;width:81.5px;overflow:hidden;font-size:14px;line-height:14px;color:#3b90d2;letter-spacing:-0.6px">NEW</div>
<div class="a" style="left:1539px;top:0;width:1px;height:30px;background:#eceef3"></div>
<div class="a" style="left:1557.5px;top:0;height:29px;padding-top:7px;width:81.5px;overflow:hidden;font-size:14px;line-height:14px;color:#3b90d2;letter-spacing:0px">Limit</div>
<div class="a" style="left:1639px;top:0;width:1px;height:30px;background:#eceef3"></div>
<div class="a" style="left:1657.5px;top:0;height:29px;padding-top:7px;width:81.5px;overflow:hidden;font-size:14px;line-height:14px;color:#3b90d2;letter-spacing:-0.15px">Account4423</div>
<div class="a" style="left:1739px;top:0;width:1px;height:30px;background:#eceef3"></div>
<div class="a" style="left:1757.5px;top:0;height:29px;padding-top:7px;width:81.5px;overflow:hidden;font-size:14px;line-height:14px;color:#3b90d2;letter-spacing:-0.2px">2e7610551ef4a</div>
<div class="a" style="left:1839px;top:0;width:1px;height:30px;background:#eceef3"></div>
</div>
<div class="a" style="left:5px;top:831px;width:1845px;height:30px;background:#0d96d5;overflow:hidden">
<div class="a" style="left:0;top:29px;width:1845px;height:1px;background:#ffffff"></div>
<div class="a" style="left:18.5px;top:0;height:29px;padding-top:7px;width:230.5px;overflow:hidden;font-size:14px;line-height:14px;color:#fff;letter-spacing:-0.27px">15 Aug 23 09:39:13.546.240105</div>
<div class="a" style="left:249px;top:0;width:1px;height:30px;background:#ffffff"></div>
<div class="a" style="left:267.5px;top:0;height:29px;padding-top:7px;width:181.5px;overflow:hidden;font-size:14px;line-height:14px;color:#fff;letter-spacing:-0.4px">Trader16935</div>
<div class="a" style="left:449px;top:0;width:1px;height:30px;background:#ffffff"></div>
<div class="a" style="left:467.5px;top:0;height:29px;padding-top:7px;width:321.5px;overflow:hidden;font-size:14px;line-height:14px;color:#fff;letter-spacing:-0.04px">af5e1f13-387a-41b0-8e08-e827f4713314</div>
<div class="a" style="left:789px;top:0;width:1px;height:30px;background:#ffffff"></div>
<div class="a" style="left:807.5px;top:0;height:29px;padding-top:7px;width:81.5px;overflow:hidden;font-size:14px;line-height:14px;color:#fff;letter-spacing:0.05px">Partial</div>
<div class="a" style="left:889px;top:0;width:1px;height:30px;background:#ffffff"></div>
<div class="a" style="left:907.5px;top:0;height:29px;padding-top:7px;width:81.5px;overflow:hidden;font-size:14px;line-height:14px;color:#fff;letter-spacing:-0.4px">24.4</div>
<div class="a" style="left:989px;top:0;width:1px;height:30px;background:#ffffff"></div>
<div class="a" style="left:1007.5px;top:0;height:29px;padding-top:7px;width:131.5px;overflow:hidden;font-size:14px;line-height:14px;color:#fff;letter-spacing:0.05px">f Instrument4922</div>
<div class="a" style="left:1139px;top:0;width:1px;height:30px;background:#ffffff"></div>
<div class="a" style="left:1157.5px;top:0;height:29px;padding-top:7px;width:81.5px;overflow:hidden;font-size:14px;line-height:14px;color:#fff;letter-spacing:-0.5px">Buy</div>
<div class="a" style="left:1239px;top:0;width:1px;height:30px;background:#ffffff"></div>
<div class="a" style="left:1257.5px;top:0;height:29px;padding-top:7px;width:81.5px;overflow:hidden;font-size:14px;line-height:14px;color:#fff;letter-spacing:0px">1</div>
<div class="a" style="left:1339px;top:0;width:1px;height:30px;background:#ffffff"></div>
<div class="a" style="left:1357.5px;top:0;height:29px;padding-top:7px;width:81.5px;overflow:hidden;font-size:14px;line-height:14px;color:#fff;letter-spacing:0px">2</div>
<div class="a" style="left:1439px;top:0;width:1px;height:30px;background:#ffffff"></div>
<div class="a" style="left:1457.5px;top:0;height:29px;padding-top:7px;width:81.5px;overflow:hidden;font-size:14px;line-height:14px;color:#fff;letter-spacing:-0.6px">PARTIALLY_FILLED</div>
<div class="a" style="left:1539px;top:0;width:1px;height:30px;background:#ffffff"></div>
<div class="a" style="left:1557.5px;top:0;height:29px;padding-top:7px;width:81.5px;overflow:hidden;font-size:14px;line-height:14px;color:#fff;letter-spacing:0px">Limit</div>
<div class="a" style="left:1639px;top:0;width:1px;height:30px;background:#ffffff"></div>
<div class="a" style="left:1657.5px;top:0;height:29px;padding-top:7px;width:81.5px;overflow:hidden;font-size:14px;line-height:14px;color:#fff;letter-spacing:-0.15px">Account4423</div>
<div class="a" style="left:1739px;top:0;width:1px;height:30px;background:#ffffff"></div>
<div class="a" style="left:1757.5px;top:0;height:29px;padding-top:7px;width:81.5px;overflow:hidden;font-size:14px;line-height:14px;color:#fff;letter-spacing:-0.2px">2e7610551ef4a</div>
<div class="a" style="left:1839px;top:0;width:1px;height:30px;background:#ffffff"></div>
</div>
<div class="a" style="left:1850px;top:651px;width:21px;height:191px;background:#f1f1f1"></div>
<svg class="a" style="left:1855px;top:659px" width="10" height="7" viewBox="0 0 10 7"><path d="M0 6h10L5 1z" fill="#a3a3a3"/></svg>
<div class="a" style="left:1852px;top:672px;width:17px;height:72px;background:#c1c1c1"></div>
<div class="a" style="left:828px;top:209px;width:330px;height:180px;background:#fff;border-radius:4px;box-shadow:1px 2px 10px rgba(0,0,0,.2)"></div>
<div class="a" style="left:839px;top:220px;font-size:14.5px;line-height:14.5px;color:#666;letter-spacing:-0.1px">09:39:13.546</div>
<div class="a" style="left:839px;top:245.8px;width:10px;height:10px;border-radius:5px;background:#91c0f5"></div>
<div class="a" style="left:855.4px;top:244px;font-size:14.5px;line-height:14.5px;color:#666;letter-spacing:0.3px">Working Buy Volume</div>
<div class="a" style="right:754px;top:243px;font-size:15px;line-height:15px;color:#555;font-weight:bold;letter-spacing:0.15px">4079.04</div>
<div class="a" style="left:839px;top:269.8px;width:10px;height:10px;border-radius:5px;background:#f09a9c"></div>
<div class="a" style="left:855.4px;top:268px;font-size:14.5px;line-height:14.5px;color:#666;letter-spacing:0.3px">Working Sell Volume</div>
<div class="a" style="right:754px;top:267px;font-size:15px;line-height:15px;color:#555;font-weight:bold;letter-spacing:0.15px">42333.76</div>
<div class="a" style="left:839px;top:293.8px;width:10px;height:10px;border-radius:5px;background:#4a90e2"></div>
<div class="a" style="left:855.4px;top:292px;font-size:14.5px;line-height:14.5px;color:#666;letter-spacing:0.3px">Filled Buy Volume</div>
<div class="a" style="right:754px;top:291px;font-size:15px;line-height:15px;color:#555;font-weight:bold;letter-spacing:0.15px">3</div>
<div class="a" style="left:839px;top:317.8px;width:10px;height:10px;border-radius:5px;background:#d43a3a"></div>
<div class="a" style="left:855.4px;top:316px;font-size:14.5px;line-height:14.5px;color:#666;letter-spacing:0.3px">Filled Sell Volume</div>
<div class="a" style="right:754px;top:315px;font-size:15px;line-height:15px;color:#555;font-weight:bold;letter-spacing:0.15px">0</div>
<div class="a" style="left:839px;top:341.8px;width:10px;height:10px;border-radius:5px;background:#91c0f5"></div>
<div class="a" style="left:855.4px;top:340px;font-size:14.5px;line-height:14.5px;color:#666;letter-spacing:0.3px">Disclosed Working Buy Volume</div>
<div class="a" style="right:754px;top:339px;font-size:15px;line-height:15px;color:#555;font-weight:bold;letter-spacing:0.15px">4079.04</div>
<div class="a" style="left:839px;top:365.8px;width:10px;height:10px;border-radius:5px;background:#f09a9c"></div>
<div class="a" style="left:855.4px;top:364px;font-size:14.5px;line-height:14.5px;color:#666;letter-spacing:0.3px">Disclosed Working Sell Volume</div>
<div class="a" style="right:754px;top:363px;font-size:15px;line-height:15px;color:#555;font-weight:bold;letter-spacing:0.15px">42333.76</div>
</body></html>
